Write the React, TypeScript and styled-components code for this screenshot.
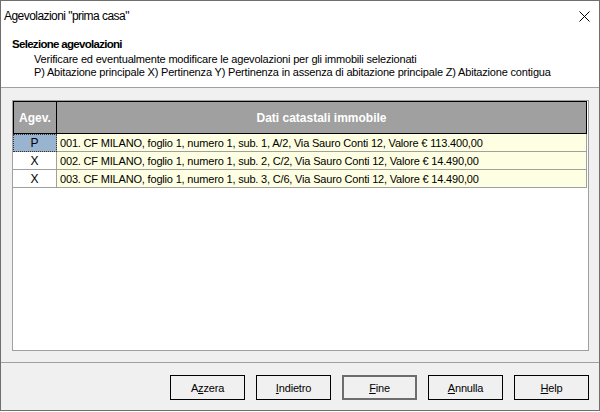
import React from 'react'
import styled, { createGlobalStyle } from 'styled-components'

const GlobalStyle = createGlobalStyle`
  html, body {
    margin: 0;
    padding: 0;
    background: #ffffff;
  }
  body {
    font-family: "Liberation Sans", Arial, sans-serif;
    font-size: 11px;
    letter-spacing: -0.18px;
    color: #000;
  }
`

const Window = styled.div`
  width: 600px;
  height: 411px;
  box-sizing: border-box;
  border: 1px solid #6f6f6f;
  background: #f0f0f0;
  display: flex;
  flex-direction: column;
`

const TitleBar = styled.div`
  height: 30px;
  background: #fff;
  display: flex;
  align-items: center;
  justify-content: space-between;
  padding: 0 9px 0 3px;
  font-size: 12px;
  letter-spacing: -0.55px;
  flex: none;
`

const CloseIcon = styled.svg`
  width: 11px;
  height: 11px;
`

const Header = styled.div`
  height: 57px;
  background: #fff;
  border-bottom: 1px solid #a0a0a0;
  padding: 7px 0 0 11px;
  box-sizing: border-box;
  flex: none;
`

const HeaderTitle = styled.div`
  font-weight: bold;
  font-size: 11.5px;
  letter-spacing: -0.7px;
  line-height: 13px;
  margin-bottom: 2px;
`

const HeaderText = styled.div`
  padding-left: 22px;
  line-height: 13px;
`

const Body = styled.div`
  flex: 1;
  padding: 12px 10px 11px 11px;
  border-bottom: 1px solid #a0a0a0;
  display: flex;
`

const Panel = styled.div`
  flex: 1;
  background: #fff;
  border: 1px solid #a0a0a0;
  padding-right: 1px;
`

const Grid = styled.div`
  display: grid;
  grid-template-columns: 44px 1fr;
`

const HeadCell = styled.div<{ $first?: boolean }>`
  height: 31px;
  background: #a0a0a0;
  color: #fff;
  font-weight: bold;
  font-size: 12px;
  letter-spacing: 0;
  display: flex;
  align-items: center;
  justify-content: center;
  border-top: 1px solid #000;
  border-bottom: 1px solid #000;
  border-left: ${p => (p.$first ? '1px solid #000' : 'none')};
  border-right: 1px solid #000;
`

const CodeCell = styled.div<{ $selected?: boolean }>`
  height: 18px;
  box-sizing: border-box;
  background: ${p => (p.$selected ? '#99b4d1' : '#fff')};
  border-bottom: 1px solid #a0a0a0;
  border-right: 1px solid #a0a0a0;
  outline: ${p => (p.$selected ? '1px dotted #333' : 'none')};
  outline-offset: -1px;
  display: flex;
  align-items: center;
  justify-content: center;
  font-size: 12px;
`

const DataCell = styled.div`
  height: 18px;
  box-sizing: border-box;
  background: #fefee2;
  border-bottom: 1px solid #a0a0a0;
  border-right: 1px solid #a0a0a0;
  display: flex;
  align-items: center;
  padding-left: 3px;
  white-space: nowrap;
`

const Footer = styled.div`
  height: 47px;
  flex: none;
  display: flex;
  justify-content: flex-end;
  align-items: flex-start;
  gap: 11px;
  padding: 12px 10px 0 0;
  box-sizing: border-box;
`

const Button = styled.button<{ $default?: boolean }>`
  width: 75px;
  height: 25px;
  box-sizing: border-box;
  background: #f0f0f0;
  border: ${p => (p.$default ? '2px solid #6d6d6d' : '1px solid #000')};
  font-family: inherit;
  font-size: 11px;
  letter-spacing: -0.18px;
  color: #000;
  padding: 0;
  u {
    text-decoration: underline;
  }
`

const rows = [
  { code: 'P', text: '001. CF MILANO, foglio 1, numero 1, sub. 1, A/2, Via Sauro Conti 12, Valore € 113.400,00', selected: true },
  { code: 'X', text: '002. CF MILANO, foglio 1, numero 1, sub. 2, C/2, Via Sauro Conti 12, Valore € 14.490,00' },
  { code: 'X', text: '003. CF MILANO, foglio 1, numero 1, sub. 3, C/6, Via Sauro Conti 12, Valore € 14.490,00' },
]

const App = () => (
  <>
    <GlobalStyle />
    <Window>
      <TitleBar>
        <span>Agevolazioni "prima casa"</span>
        <CloseIcon viewBox="0 0 11 11">
          <path d="M0.5 0.5 L10.5 10.5 M10.5 0.5 L0.5 10.5" stroke="#000" strokeWidth="1" />
        </CloseIcon>
      </TitleBar>
      <Header>
        <HeaderTitle>Selezione agevolazioni</HeaderTitle>
        <HeaderText>Verificare ed eventualmente modificare le agevolazioni per gli immobili selezionati</HeaderText>
        <HeaderText>
          P) Abitazione principale X) Pertinenza Y) Pertinenza in assenza di abitazione principale Z) Abitazione contigua
        </HeaderText>
      </Header>
      <Body>
        <Panel>
          <Grid>
            <HeadCell $first>Agev.</HeadCell>
            <HeadCell>Dati catastali immobile</HeadCell>
            {rows.map((r, i) => (
              <React.Fragment key={i}>
                <CodeCell $selected={r.selected}>{r.code}</CodeCell>
                <DataCell>{r.text}</DataCell>
              </React.Fragment>
            ))}
          </Grid>
        </Panel>
      </Body>
      <Footer>
        <Button>
          A<u>z</u>zera
        </Button>
        <Button>
          <u>I</u>ndietro
        </Button>
        <Button $default>
          <u>F</u>ine
        </Button>
        <Button>
          <u>A</u>nnulla
        </Button>
        <Button>
          <u>H</u>elp
        </Button>
      </Footer>
    </Window>
  </>
)

export default App
